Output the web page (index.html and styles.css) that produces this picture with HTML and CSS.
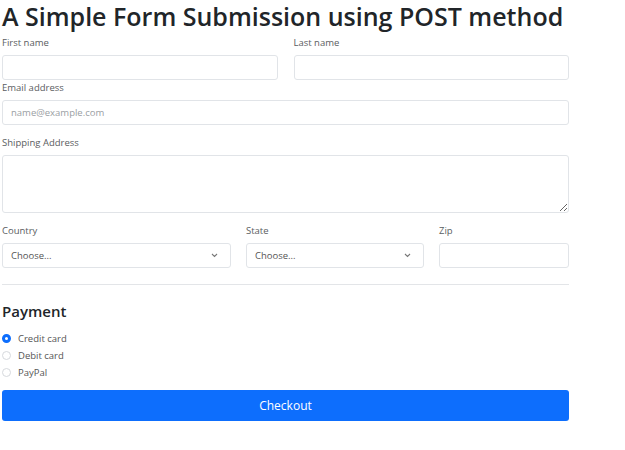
FILE: index.html
```html
<!DOCTYPE html>
<html>
<head>
<meta charset="utf-8">
<link rel="stylesheet" href="styles.css">
</head>
<body>
<div class="page">
  <h1 class="title">A Simple Form Submission using POST method</h1>
  <form class="form">
    <div class="row row-names">
      <div class="field">
        <label class="label">First name</label>
        <input class="control" type="text">
      </div>
      <div class="field">
        <label class="label">Last name</label>
        <input class="control" type="text">
      </div>
    </div>
    <div class="field field-email">
      <label class="label">Email address</label>
      <input class="control" type="email" placeholder="name@example.com">
    </div>
    <div class="field field-address">
      <label class="label">Shipping Address</label>
      <textarea class="control area"></textarea>
    </div>
    <div class="row row-loc">
      <div class="field">
        <label class="label">Country</label>
        <div class="select-wrap">
          <select class="control select"><option>Choose...</option></select>
          <svg class="chev" width="7" height="5" viewBox="0 0 7 5"><path d="M1 1 L3.5 3.5 L6 1" fill="none" stroke="#777" stroke-width="1.1"/></svg>
        </div>
      </div>
      <div class="field">
        <label class="label">State</label>
        <div class="select-wrap">
          <select class="control select"><option>Choose...</option></select>
          <svg class="chev" width="7" height="5" viewBox="0 0 7 5"><path d="M1 1 L3.5 3.5 L6 1" fill="none" stroke="#777" stroke-width="1.1"/></svg>
        </div>
      </div>
      <div class="field">
        <label class="label">Zip</label>
        <input class="control" type="text">
      </div>
    </div>
    <hr class="rule">
    <h4 class="section">Payment</h4>
    <div class="radios">
      <div class="radio"><span class="dot dot-on"></span><span>Credit card</span></div>
      <div class="radio"><span class="dot"></span><span>Debit card</span></div>
      <div class="radio"><span class="dot"></span><span>PayPal</span></div>
    </div>
    <button class="btn" type="button">Checkout</button>
  </form>
</div>
</body>
</html>
```
FILE: styles.css
```css
* { box-sizing: border-box; }
body {
  margin: 0;
  background: #fff;
  font-family: "Open Sans", "Noto Sans", sans-serif;
  color: #212529;
}
.page {
  width: 571px;
  padding: 0 2px;
}
.title {
  margin: 0;
  font-size: 25px;
  line-height: 32px;
  font-weight: 600;
  color: #212529;
  white-space: nowrap;
}
.form {
  display: flex;
  flex-direction: column;
  margin-top: 4px;
}
.row {
  display: grid;
  column-gap: 16px;
}
.row-names { grid-template-columns: 1fr 1fr; }
.row-loc { grid-template-columns: 229px 178px 1fr; column-gap: 15px; margin-top: 11px; }
.field {
  display: flex;
  flex-direction: column;
}
.field-email { margin-top: 1px; }
.field-address { margin-top: 11px; }
.label {
  font-size: 9.5px;
  line-height: 14px;
  color: #5a5d61;
  margin-bottom: 5px;
}
.control {
  display: block;
  width: 100%;
  height: 25px;
  border: 1px solid #e1e4e8;
  border-radius: 3px;
  background: #fff;
  font-family: inherit;
  font-size: 9.5px;
  color: #555;
  padding: 0 8px;
  margin: 0;
  outline: none;
}
.control::placeholder { color: #9a9ea3; }
.area {
  height: 58px;
  resize: vertical;
}
.select-wrap { position: relative; }
.select {
  appearance: none;
  -webkit-appearance: none;
}
.chev {
  position: absolute;
  right: 13px;
  top: 10px;
}
.rule {
  margin: 16px 0 0;
  border: 0;
  border-top: 1px solid #e3e5e8;
  height: 0;
}
.section {
  margin: 17px 0 0;
  font-size: 15px;
  line-height: 19px;
  font-weight: 600;
  color: #212529;
}
.radios {
  margin-top: 9px;
  display: flex;
  flex-direction: column;
}
.radio {
  display: flex;
  align-items: center;
  gap: 7px;
  height: 17px;
  font-size: 9.5px;
  color: #555;
}
.dot {
  width: 9px;
  height: 9px;
  border-radius: 50%;
  border: 1px solid #d6d9dd;
  background: #fff;
  flex: none;
}
.dot-on {
  border: 3px solid #0d6efd;
  background: #fff;
}
.btn {
  margin-top: 9px;
  height: 31px;
  width: 100%;
  border: 0;
  border-radius: 3px;
  background: #0d6efd;
  color: #fff;
  font-family: inherit;
  font-size: 12px;
  padding: 0;
}
```
